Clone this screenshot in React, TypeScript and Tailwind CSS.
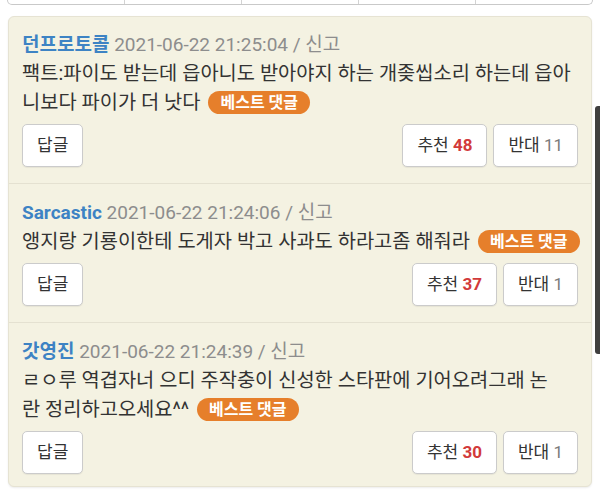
import React from "react";

type C = {
  name: string;
  date: string;
  lines: string[];
  up: number;
  down: number;
};

const comments: C[] = [
  {
    name: "던프로토콜",
    date: "2021-06-22 21:25:04",
    lines: ["팩트:파이도 받는데 읍아니도 받아야지 하는 개좆씹소리 하는데 읍아", "니보다 파이가 더 낫다"],
    up: 48,
    down: 11,
  },
  {
    name: "Sarcastic",
    date: "2021-06-22 21:24:06",
    lines: ["앵지랑 기룡이한테 도게자 박고 사과도 하라고좀 해줘라"],
    up: 37,
    down: 1,
  },
  {
    name: "갓영진",
    date: "2021-06-22 21:24:39",
    lines: ["ㄹㅇ루 역겹자너 으디 주작충이 신성한 스타판에 기어오려그래 논", "란 정리하고오세요^^"],
    up: 30,
    down: 1,
  },
];

function Btn({ children }: { children: React.ReactNode }) {
  return (
    <div className="h-[43px] px-[14px] flex items-center bg-white border border-[#cbcbcb] rounded-[5px] text-[17px] text-[#333] shadow-[0_1px_1px_rgba(0,0,0,0.06)] whitespace-nowrap">
      {children}
    </div>
  );
}

function Comment({ c, first, last }: { c: C; first: boolean; last: boolean }) {
  return (
    <div
      className={`px-[13px] ${first ? "pt-[13px]" : "pt-[14px]"} ${
        last ? "pb-[12px]" : "pb-[16px] border-b border-[#e4e1d1]"
      }`}
    >
      <div className="text-[19px] leading-[29px] whitespace-nowrap">
        <span className="font-bold text-[#3d83c4]">{c.name}</span>{" "}
        <span className="text-[#8d8d8d]">{c.date} / 신고</span>
      </div>
      <div className="text-[19.8px] leading-[29px] text-[#333] whitespace-nowrap">
        {c.lines.map((l, i) => (
          <div key={i}>
            {l}
            {i === c.lines.length - 1 && (
              <>
                {" "}
                <span className="inline-block align-middle ml-[3px] mb-[3px] h-[23px] leading-[23px] px-[12px] rounded-full bg-[#e67f2b] text-white font-bold text-[16px]">
                  베스트 댓글
                </span>
              </>
            )}
          </div>
        ))}
      </div>
      <div className="mt-[7px] flex justify-between">
        <Btn>답글</Btn>
        <div className="flex gap-[6px]">
          <Btn>
            추천&nbsp;<span className="font-bold text-[#d23a3a]">{c.up}</span>
          </Btn>
          <Btn>
            반대&nbsp;<span className="text-[#7a7a7a]">{c.down}</span>
          </Btn>
        </div>
      </div>
    </div>
  );
}

export default function App() {
  return (
    <div
      className="relative w-[600px] h-[492px] overflow-hidden bg-white"
      style={{ fontFamily: 'Roboto, "Noto Sans CJK KR", sans-serif' }}
    >
      <div className="mx-[7px] h-[5px] flex border border-t-0 border-[#c9c9c9] rounded-b-[5px]">
        <div className="flex-1 border-r border-[#d3d3d3]" />
        <div className="flex-1 border-r border-[#d3d3d3]" />
        <div className="flex-1 border-r border-[#d3d3d3]" />
        <div className="flex-1 border-r border-[#d3d3d3]" />
        <div className="flex-1" />
      </div>
      <div className="mx-[8px] mt-[11px] bg-[#f4f2e2] border border-[#e6e3d3] rounded-[6px] shadow-[0_1px_2px_rgba(0,0,0,0.08)]">
        {comments.map((c, i) => (
          <Comment key={i} c={c} first={i === 0} last={i === comments.length - 1} />
        ))}
      </div>
      <div className="absolute right-0 top-[106px] w-[5px] h-[248px] bg-[#3f3f3f] rounded-l-[3px]" />
    </div>
  );
}
